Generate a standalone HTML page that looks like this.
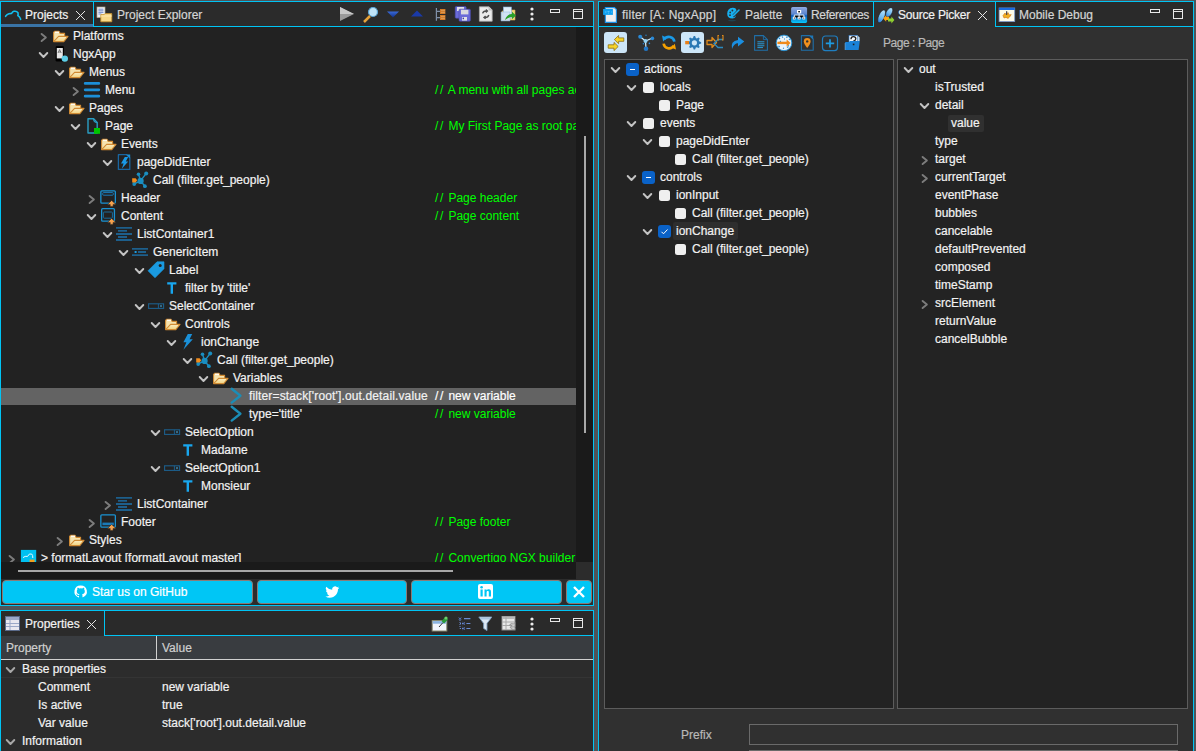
<!DOCTYPE html>
<html><head><meta charset="utf-8"><style>
html,body{margin:0;padding:0;width:1196px;height:751px;overflow:hidden;background:#4a4a4a}
.a{position:absolute;display:block}
.t{position:absolute;white-space:pre;font-family:"Liberation Sans",sans-serif;font-size:12px;-webkit-text-stroke-width:0.2px}
svg.a{overflow:visible}
</style></head><body>
<div class="a" style="left:0;top:0;width:1196px;height:751px;background:#505458"></div>
<div class="a" style="left:0px;top:1px;width:594px;height:605px;background:#222222;border:1px solid #00c4f4;box-sizing:border-box;"></div>
<div class="a" style="left:1px;top:2px;width:592px;height:24px;background:#2b2b2b;"></div>
<div class="a" style="left:1px;top:26px;width:592px;height:1px;background:#00c4f4;"></div>
<div class="a" style="left:1px;top:2px;width:92px;height:24px;background:#2b2b2b;"></div>
<div class="a" style="left:1px;top:24px;width:92px;height:3px;background:#3a74a6;"></div>
<div class="a" style="left:93px;top:1px;width:1px;height:26px;background:#00c4f4;"></div>
<svg class="a" style="left:0px;top:3px;" width="24" height="22" viewBox="0 0 24 22"><path d="M5.6 13.3 Q7 11.4 8.9 10.8 Q10.6 10.4 11.6 10.4 Q12.6 8.6 14 8.3 Q16.6 7.8 18 9.8 Q18.4 11.6 17.8 12.6 Q19.2 13.4 19.8 14.4 Q20.6 15.4 20.6 16.4" fill="none" stroke="#12c0f0" stroke-width="1.6" stroke-linecap="round" stroke-linejoin="round"/></svg>
<div class="t" style="left:25px;top:6px;height:18px;line-height:18px;color:#f2f2f2;">Projects</div>
<svg class="a" style="left:75px;top:10px;" width="11" height="11" viewBox="0 0 11 11"><path d="M1 1 L10 10 M10 1 L1 10" stroke="#e6e6e6" stroke-width="1"/></svg>
<svg class="a" style="left:94px;top:3px;" width="22" height="22" viewBox="0 0 22 22"><rect x="3" y="4" width="8" height="10.6" fill="#eef0f8" stroke="#b0a890" stroke-width="0.7"/><path d="M4.4 6.2h5M4.4 7.8h5M4.4 9.4h5M4.4 11h3" stroke="#5a78c0" stroke-width="0.8"/><path d="M6.8 11.6 H10.2 L11.2 10.6 H17.8 V18.8 H6.8 Z" fill="#f8d888" stroke="#c8902a" stroke-width="0.8"/><path d="M6.8 13 H17.8" stroke="#fff0c0" stroke-width="0.8"/></svg>
<div class="t" style="left:117px;top:6px;height:18px;line-height:18px;color:#d4d4d4;">Project Explorer</div>
<svg class="a" style="left:338px;top:6px;" width="18" height="16" viewBox="0 0 18 16"><path d="M2 1 L16 8 L2 15 Z" fill="#9a9a9a"/><path d="M2 1 L16 8 L2 8Z" fill="#c8c8c8"/></svg>
<svg class="a" style="left:362px;top:6px;" width="18" height="18" viewBox="0 0 18 18"><circle cx="11" cy="6" r="4.5" fill="#bfe3f7" stroke="#5aa4d4" stroke-width="1.2"/><path d="M2 16 L8 10" stroke="#e6a23a" stroke-width="2.5"/></svg>
<svg class="a" style="left:386px;top:11px;" width="14" height="8" viewBox="0 0 14 8"><defs><linearGradient id="tri" x1="0" y1="0" x2="0" y2="1"><stop offset="0" stop-color="#3a6ad8"/><stop offset="1" stop-color="#10308a"/></linearGradient></defs><path d="M1 0.5 H13 L7 6.5 Z" fill="url(#tri)"/></svg>
<svg class="a" style="left:410px;top:10px;" width="14" height="8" viewBox="0 0 14 8"><path d="M1 6.5 H13 L7 0.5 Z" fill="#1a3aa8"/></svg>
<svg class="a" style="left:434px;top:6px;" width="14" height="16" viewBox="0 0 14 16"><path d="M2.4 2 V14.8 M2.4 5.4 H6 M2.4 11.6 H6" stroke="#8090a8" stroke-width="1.2"/><rect x="6" y="3" width="5.4" height="5" fill="#d07a28"/><rect x="6" y="9" width="5.4" height="5" fill="#d07a28"/><path d="M7.6 4.6h0.8M9.6 4.6h0.8M7.6 6.4h0.8M9.6 6.4h0.8M7.6 10.6h0.8M9.6 10.6h0.8M7.6 12.4h0.8M9.6 12.4h0.8" stroke="#ffe0b0" stroke-width="0.8"/></svg>
<svg class="a" style="left:454px;top:6px;" width="18" height="18" viewBox="0 0 18 18"><rect x="1.2" y="0.6" width="11" height="11.6" rx="1" fill="#6a6ad8" stroke="#4a4aa8" stroke-width="0.6"/><rect x="3" y="1" width="7" height="4" fill="#e0e0e8"/><rect x="5" y="3.2" width="11.4" height="12" rx="1" fill="#6a6ad8" stroke="#4a4aa8" stroke-width="0.6"/><rect x="7" y="3.8" width="7.4" height="4.6" fill="#d8d8e0"/><rect x="8" y="11" width="5" height="3.6" fill="#e0e0e8"/><rect x="8.6" y="11.6" width="1.4" height="1.6" fill="#3a3aa0"/></svg>
<svg class="a" style="left:478px;top:6px;" width="16" height="17" viewBox="0 0 16 17"><path d="M1.4 0.8 H11 L14.2 4 V15.2 H1.4 Z" fill="#ececec" stroke="#a8a8a8" stroke-width="0.8"/><path d="M11 0.8 V4 H14.2" fill="#d0d0d0" stroke="#a8a8a8" stroke-width="0.6"/><path d="M4.6 7.4 Q5.4 4.6 8.6 5 M7.8 3.6 L9.4 5 L7.8 6.4 M10.8 9 Q10 11.8 6.8 11.4 M7.6 10 L6 11.4 L7.6 12.8" fill="none" stroke="#505050" stroke-width="1.4"/></svg>
<svg class="a" style="left:500px;top:6px;" width="18" height="17" viewBox="0 0 18 17"><path d="M2 5 H6 L7 4 H15 V14 H2 Z" fill="#f0d878" stroke="#d0a850" stroke-width="0.6"/><rect x="3.4" y="1" width="8" height="11" fill="#e0eefa" stroke="#8ab0d8" stroke-width="0.6"/><path d="M1 6 H10 V15 H1 Z" fill="#cfe2f6" stroke="#8ab0d8" stroke-width="0.5" opacity="0.9"/><path d="M5 14 Q7 8 12 8 V5.8 L16 9.6 L12 13.2 V11 Q9 11 5 14 Z" fill="#2aa02a"/></svg>
<svg class="a" style="left:529.4px;top:6.5px;" width="6" height="16" viewBox="0 0 6 16"><circle cx="3" cy="2" r="1.6" fill="#ececec"/><circle cx="3" cy="7" r="1.6" fill="#ececec"/><circle cx="3" cy="12" r="1.6" fill="#ececec"/></svg>
<svg class="a" style="left:550px;top:9px;" width="12" height="12" viewBox="0 0 12 12"><rect x="0.5" y="0.5" width="9" height="3" fill="none" stroke="#e8e8e8" stroke-width="1"/></svg>
<svg class="a" style="left:573px;top:9px;" width="12" height="12" viewBox="0 0 12 12"><rect x="0.5" y="0.5" width="9" height="9" fill="none" stroke="#e8e8e8" stroke-width="1"/><path d="M0 2.5 H10" stroke="#e8e8e8" stroke-width="1"/></svg>
<div class="a" style="left:0px;top:27px;width:576px;height:535px;overflow:hidden">
<svg class="a" style="left:36px;top:0px;" width="14" height="18" viewBox="0 0 14 18"><path d="M5.6 6.9 L9.9 10.5 L5.6 14.1" fill="none" stroke="#7c7c7c" stroke-width="1.9" stroke-linecap="round" stroke-linejoin="round"/></svg>
<svg class="a" style="left:52px;top:0px;" width="18" height="18" viewBox="0 0 18 18"><defs><linearGradient id="fg" x1="0" y1="0" x2="0" y2="1"><stop offset="0" stop-color="#fbeec4"/><stop offset="1" stop-color="#f2d27e"/></linearGradient></defs><path d="M1.6 14.6 V5.4 L2.8 4.2 H7 L8.2 6.4 H12.6 V9.4" fill="#f6e3ae" stroke="#d18b34" stroke-width="1.1" stroke-linejoin="round"/><rect x="3" y="4.6" width="4" height="1.4" fill="#fffaf0"/><path d="M1.6 14.6 L6.6 9.4 H16 L11.8 14.6 Z" fill="url(#fg)" stroke="#d18b34" stroke-width="1.1" stroke-linejoin="round"/></svg>
<div class="t" style="left:73px;top:0px;height:18px;line-height:18px;color:#f2f2f2;">Platforms</div>
<svg class="a" style="left:36px;top:18px;" width="14" height="18" viewBox="0 0 14 18"><path d="M3.7 8 L7.5 12 L11.3 8" fill="none" stroke="#c4c4c4" stroke-width="1.9" stroke-linecap="round" stroke-linejoin="round"/></svg>
<svg class="a" style="left:52px;top:18px;" width="18" height="18" viewBox="0 0 18 18"><rect x="3.6" y="1" width="8.4" height="15.6" rx="1.4" fill="#000"/><rect x="4.8" y="3" width="6" height="10.4" fill="#e6e6e6"/><path d="M6 8 L7.6 4.6 L9.2 8 M6.6 7 H8.6" stroke="#555" stroke-width="0.7" fill="none"/><circle cx="12.8" cy="13.6" r="3.2" fill="#5ccde6"/></svg>
<div class="t" style="left:73px;top:18px;height:18px;line-height:18px;color:#f2f2f2;">NgxApp</div>
<svg class="a" style="left:52px;top:36px;" width="14" height="18" viewBox="0 0 14 18"><path d="M3.7 8 L7.5 12 L11.3 8" fill="none" stroke="#c4c4c4" stroke-width="1.9" stroke-linecap="round" stroke-linejoin="round"/></svg>
<svg class="a" style="left:68px;top:36px;" width="18" height="18" viewBox="0 0 18 18"><defs><linearGradient id="fg" x1="0" y1="0" x2="0" y2="1"><stop offset="0" stop-color="#fbeec4"/><stop offset="1" stop-color="#f2d27e"/></linearGradient></defs><path d="M1.6 14.6 V5.4 L2.8 4.2 H7 L8.2 6.4 H12.6 V9.4" fill="#f6e3ae" stroke="#d18b34" stroke-width="1.1" stroke-linejoin="round"/><rect x="3" y="4.6" width="4" height="1.4" fill="#fffaf0"/><path d="M1.6 14.6 L6.6 9.4 H16 L11.8 14.6 Z" fill="url(#fg)" stroke="#d18b34" stroke-width="1.1" stroke-linejoin="round"/></svg>
<div class="t" style="left:89px;top:36px;height:18px;line-height:18px;color:#f2f2f2;">Menus</div>
<svg class="a" style="left:68px;top:54px;" width="14" height="18" viewBox="0 0 14 18"><path d="M5.6 6.9 L9.9 10.5 L5.6 14.1" fill="none" stroke="#7c7c7c" stroke-width="1.9" stroke-linecap="round" stroke-linejoin="round"/></svg>
<svg class="a" style="left:84px;top:54px;" width="18" height="18" viewBox="0 0 18 18"><path d="M1.2 2.4 H14.8 M1.2 8.8 H14.8 M1.2 15.2 H14.8" stroke="#1c8fd8" stroke-width="2.8" stroke-linecap="round"/></svg>
<div class="t" style="left:105px;top:54px;height:18px;line-height:18px;color:#f2f2f2;">Menu</div>
<div class="t" style="left:435px;top:54px;height:18px;line-height:18px;color:#00ff00;-webkit-text-stroke-width:0;"><span style="letter-spacing:1.7px">//</span> A menu with all pages ac</div>
<svg class="a" style="left:52px;top:72px;" width="14" height="18" viewBox="0 0 14 18"><path d="M3.7 8 L7.5 12 L11.3 8" fill="none" stroke="#c4c4c4" stroke-width="1.9" stroke-linecap="round" stroke-linejoin="round"/></svg>
<svg class="a" style="left:68px;top:72px;" width="18" height="18" viewBox="0 0 18 18"><defs><linearGradient id="fg" x1="0" y1="0" x2="0" y2="1"><stop offset="0" stop-color="#fbeec4"/><stop offset="1" stop-color="#f2d27e"/></linearGradient></defs><path d="M1.6 14.6 V5.4 L2.8 4.2 H7 L8.2 6.4 H12.6 V9.4" fill="#f6e3ae" stroke="#d18b34" stroke-width="1.1" stroke-linejoin="round"/><rect x="3" y="4.6" width="4" height="1.4" fill="#fffaf0"/><path d="M1.6 14.6 L6.6 9.4 H16 L11.8 14.6 Z" fill="url(#fg)" stroke="#d18b34" stroke-width="1.1" stroke-linejoin="round"/></svg>
<div class="t" style="left:89px;top:72px;height:18px;line-height:18px;color:#f2f2f2;">Pages</div>
<svg class="a" style="left:68px;top:90px;" width="14" height="18" viewBox="0 0 14 18"><path d="M3.7 8 L7.5 12 L11.3 8" fill="none" stroke="#c4c4c4" stroke-width="1.9" stroke-linecap="round" stroke-linejoin="round"/></svg>
<svg class="a" style="left:84px;top:90px;" width="18" height="18" viewBox="0 0 18 18"><path d="M4 1.8 H9.6 L13.2 5.6 V16 H4 Z" fill="none" stroke="#2a9ec4" stroke-width="1.4" stroke-linejoin="round"/><path d="M9.6 1.8 Q9.6 5.6 13.2 5.6" fill="none" stroke="#2a9ec4" stroke-width="1.1"/><rect x="10" y="11" width="6" height="5.8" fill="#00c600"/></svg>
<div class="t" style="left:105px;top:90px;height:18px;line-height:18px;color:#f2f2f2;">Page</div>
<div class="t" style="left:435px;top:90px;height:18px;line-height:18px;color:#00ff00;-webkit-text-stroke-width:0;"><span style="letter-spacing:1.7px">//</span> My First Page as root pag</div>
<svg class="a" style="left:84px;top:108px;" width="14" height="18" viewBox="0 0 14 18"><path d="M3.7 8 L7.5 12 L11.3 8" fill="none" stroke="#c4c4c4" stroke-width="1.9" stroke-linecap="round" stroke-linejoin="round"/></svg>
<svg class="a" style="left:100px;top:108px;" width="18" height="18" viewBox="0 0 18 18"><defs><linearGradient id="fg" x1="0" y1="0" x2="0" y2="1"><stop offset="0" stop-color="#fbeec4"/><stop offset="1" stop-color="#f2d27e"/></linearGradient></defs><path d="M1.6 14.6 V5.4 L2.8 4.2 H7 L8.2 6.4 H12.6 V9.4" fill="#f6e3ae" stroke="#d18b34" stroke-width="1.1" stroke-linejoin="round"/><rect x="3" y="4.6" width="4" height="1.4" fill="#fffaf0"/><path d="M1.6 14.6 L6.6 9.4 H16 L11.8 14.6 Z" fill="url(#fg)" stroke="#d18b34" stroke-width="1.1" stroke-linejoin="round"/></svg>
<div class="t" style="left:121px;top:108px;height:18px;line-height:18px;color:#f2f2f2;">Events</div>
<svg class="a" style="left:100px;top:126px;" width="14" height="18" viewBox="0 0 14 18"><path d="M3.7 8 L7.5 12 L11.3 8" fill="none" stroke="#c4c4c4" stroke-width="1.9" stroke-linecap="round" stroke-linejoin="round"/></svg>
<svg class="a" style="left:116px;top:126px;" width="18" height="18" viewBox="0 0 18 18"><path d="M2.4 1.7 H10.6 L13.8 4.9 V16.4 H2.4 Z" fill="none" stroke="#1a66a0" stroke-width="1.3" stroke-linejoin="round"/><path d="M10.2 1.4 L14.2 1.4 L14.2 5.4 Z" fill="#1a90d8"/><path d="M8.8 4 H12.2 L9.8 8.4 H12.2 L5.8 15.8 L7.6 10.6 H5 Z" fill="#1a9ae8"/></svg>
<div class="t" style="left:137px;top:126px;height:18px;line-height:18px;color:#f2f2f2;">pageDidEnter</div>
<svg class="a" style="left:132px;top:144px;" width="18" height="18" viewBox="0 0 18 18"><path d="M8.6 9.9 L6.5 3.2 M8.6 9.9 L14.2 2.4 M8.6 9.9 L12.9 15.2 M8.6 9.9 L2 13" stroke="#1a8ec0" stroke-width="1.4"/><circle cx="8.6" cy="9.9" r="3.1" fill="#1a8ec0"/><circle cx="6.5" cy="3.2" r="1.8" fill="#1a8ec0"/><circle cx="14.2" cy="2.6" r="2" fill="#1a8ec0"/><circle cx="12.9" cy="15.2" r="1.9" fill="#1a8ec0"/><circle cx="2.2" cy="13" r="1.9" fill="#1a8ec0"/><path d="M0.2 7.2 H3.6 L5.2 9.3 L3.6 11.5 H0.2 Z" fill="#f08c1e"/></svg>
<div class="t" style="left:153px;top:144px;height:18px;line-height:18px;color:#f2f2f2;">Call (filter.get_people)</div>
<svg class="a" style="left:84px;top:162px;" width="14" height="18" viewBox="0 0 14 18"><path d="M5.6 6.9 L9.9 10.5 L5.6 14.1" fill="none" stroke="#7c7c7c" stroke-width="1.9" stroke-linecap="round" stroke-linejoin="round"/></svg>
<svg class="a" style="left:100px;top:162px;" width="18" height="18" viewBox="0 0 18 18"><rect x="0.85" y="1.85" width="14.5" height="12.3" rx="1" fill="none" stroke="#1a92d2" stroke-width="1.3"/><rect x="2.7" y="3.6" width="10.6" height="2.6" rx="0.8" fill="none" stroke="#1a7ab8" stroke-width="1"/><path d="M11.65 11.4 L15.8 15.4 H13.1 V17.4 H10.2 V15.4 H7.5 Z" fill="#f6a24e" stroke="#222" stroke-width="0.5" stroke-linejoin="round"/></svg>
<div class="t" style="left:121px;top:162px;height:18px;line-height:18px;color:#f2f2f2;">Header</div>
<div class="t" style="left:435px;top:162px;height:18px;line-height:18px;color:#00ff00;-webkit-text-stroke-width:0;"><span style="letter-spacing:1.7px">//</span> Page header</div>
<svg class="a" style="left:84px;top:180px;" width="14" height="18" viewBox="0 0 14 18"><path d="M3.7 8 L7.5 12 L11.3 8" fill="none" stroke="#c4c4c4" stroke-width="1.9" stroke-linecap="round" stroke-linejoin="round"/></svg>
<svg class="a" style="left:100px;top:180px;" width="18" height="18" viewBox="0 0 18 18"><rect x="1.65" y="1.65" width="12.8" height="12.5" rx="1" fill="none" stroke="#1a92d2" stroke-width="1.3"/><rect x="3.4" y="5" width="9" height="6.2" rx="0.8" fill="none" stroke="#1a6a9a" stroke-width="1"/><path d="M11.65 11.4 L15.8 15.4 H13.1 V17.4 H10.2 V15.4 H7.5 Z" fill="#f6a24e" stroke="#222" stroke-width="0.5" stroke-linejoin="round"/></svg>
<div class="t" style="left:121px;top:180px;height:18px;line-height:18px;color:#f2f2f2;">Content</div>
<div class="t" style="left:435px;top:180px;height:18px;line-height:18px;color:#00ff00;-webkit-text-stroke-width:0;"><span style="letter-spacing:1.7px">//</span> Page content</div>
<svg class="a" style="left:100px;top:198px;" width="14" height="18" viewBox="0 0 14 18"><path d="M3.7 8 L7.5 12 L11.3 8" fill="none" stroke="#c4c4c4" stroke-width="1.9" stroke-linecap="round" stroke-linejoin="round"/></svg>
<svg class="a" style="left:116px;top:198px;" width="18" height="18" viewBox="0 0 18 18"><path d="M0 2.8 H16 M2 5.9 H11 M0 9 H16 M2 12 H11 M0 15 H16" stroke="#1d5f8c" stroke-width="1.8"/></svg>
<div class="t" style="left:137px;top:198px;height:18px;line-height:18px;color:#f2f2f2;">ListContainer1</div>
<svg class="a" style="left:116px;top:216px;" width="14" height="18" viewBox="0 0 14 18"><path d="M3.7 8 L7.5 12 L11.3 8" fill="none" stroke="#c4c4c4" stroke-width="1.9" stroke-linecap="round" stroke-linejoin="round"/></svg>
<svg class="a" style="left:132px;top:216px;" width="18" height="18" viewBox="0 0 18 18"><path d="M0 5.9 H16 M6 9 H14 M0 12.2 H16" stroke="#1d5f8c" stroke-width="1.8"/><rect x="2.6" y="8" width="2" height="2" fill="#1a9ae0"/></svg>
<div class="t" style="left:153px;top:216px;height:18px;line-height:18px;color:#f2f2f2;">GenericItem</div>
<svg class="a" style="left:132px;top:234px;" width="14" height="18" viewBox="0 0 14 18"><path d="M3.7 8 L7.5 12 L11.3 8" fill="none" stroke="#c4c4c4" stroke-width="1.9" stroke-linecap="round" stroke-linejoin="round"/></svg>
<svg class="a" style="left:148px;top:234px;" width="18" height="18" viewBox="0 0 18 18"><path d="M0 9.8 L9 0.8 H16 V7.8 L7 16.8 Z" fill="#1a9ae0" stroke="#1a9ae0" stroke-width="0.6" stroke-linejoin="round"/><circle cx="12.2" cy="4.6" r="1.5" fill="#222"/></svg>
<div class="t" style="left:169px;top:234px;height:18px;line-height:18px;color:#f2f2f2;">Label</div>
<svg class="a" style="left:164px;top:252px;" width="18" height="18" viewBox="0 0 18 18"><path d="M3.2 3.3 H12.4 V5.5 H9 V14.8 H6.6 V5.5 H3.2 Z" fill="#18a6ee"/></svg>
<div class="t" style="left:185px;top:252px;height:18px;line-height:18px;color:#f2f2f2;">filter by 'title'</div>
<svg class="a" style="left:132px;top:270px;" width="14" height="18" viewBox="0 0 14 18"><path d="M3.7 8 L7.5 12 L11.3 8" fill="none" stroke="#c4c4c4" stroke-width="1.9" stroke-linecap="round" stroke-linejoin="round"/></svg>
<svg class="a" style="left:148px;top:270px;" width="18" height="18" viewBox="0 0 18 18"><rect x="0.6" y="6.8" width="15" height="4.6" fill="none" stroke="#1d5f8c" stroke-width="1.1"/><path d="M10.4 6.8 V11.4" stroke="#1d5f8c" stroke-width="1"/><circle cx="13" cy="9.1" r="1.1" fill="#3a7a9a"/></svg>
<div class="t" style="left:169px;top:270px;height:18px;line-height:18px;color:#f2f2f2;">SelectContainer</div>
<svg class="a" style="left:148px;top:288px;" width="14" height="18" viewBox="0 0 14 18"><path d="M3.7 8 L7.5 12 L11.3 8" fill="none" stroke="#c4c4c4" stroke-width="1.9" stroke-linecap="round" stroke-linejoin="round"/></svg>
<svg class="a" style="left:164px;top:288px;" width="18" height="18" viewBox="0 0 18 18"><defs><linearGradient id="fg" x1="0" y1="0" x2="0" y2="1"><stop offset="0" stop-color="#fbeec4"/><stop offset="1" stop-color="#f2d27e"/></linearGradient></defs><path d="M1.6 14.6 V5.4 L2.8 4.2 H7 L8.2 6.4 H12.6 V9.4" fill="#f6e3ae" stroke="#d18b34" stroke-width="1.1" stroke-linejoin="round"/><rect x="3" y="4.6" width="4" height="1.4" fill="#fffaf0"/><path d="M1.6 14.6 L6.6 9.4 H16 L11.8 14.6 Z" fill="url(#fg)" stroke="#d18b34" stroke-width="1.1" stroke-linejoin="round"/></svg>
<div class="t" style="left:185px;top:288px;height:18px;line-height:18px;color:#f2f2f2;">Controls</div>
<svg class="a" style="left:164px;top:306px;" width="14" height="18" viewBox="0 0 14 18"><path d="M3.7 8 L7.5 12 L11.3 8" fill="none" stroke="#c4c4c4" stroke-width="1.9" stroke-linecap="round" stroke-linejoin="round"/></svg>
<svg class="a" style="left:180px;top:306px;" width="18" height="18" viewBox="0 0 18 18"><path d="M7.8 1 H12.2 L9.6 6.2 H12.8 L3.4 16.8 L6.4 9.2 H3.4 Z" fill="#1a90d8"/></svg>
<div class="t" style="left:201px;top:306px;height:18px;line-height:18px;color:#f2f2f2;">ionChange</div>
<svg class="a" style="left:180px;top:324px;" width="14" height="18" viewBox="0 0 14 18"><path d="M3.7 8 L7.5 12 L11.3 8" fill="none" stroke="#c4c4c4" stroke-width="1.9" stroke-linecap="round" stroke-linejoin="round"/></svg>
<svg class="a" style="left:196px;top:324px;" width="18" height="18" viewBox="0 0 18 18"><path d="M8.6 9.9 L6.5 3.2 M8.6 9.9 L14.2 2.4 M8.6 9.9 L12.9 15.2 M8.6 9.9 L2 13" stroke="#1a8ec0" stroke-width="1.4"/><circle cx="8.6" cy="9.9" r="3.1" fill="#1a8ec0"/><circle cx="6.5" cy="3.2" r="1.8" fill="#1a8ec0"/><circle cx="14.2" cy="2.6" r="2" fill="#1a8ec0"/><circle cx="12.9" cy="15.2" r="1.9" fill="#1a8ec0"/><circle cx="2.2" cy="13" r="1.9" fill="#1a8ec0"/><path d="M0.2 7.2 H3.6 L5.2 9.3 L3.6 11.5 H0.2 Z" fill="#f08c1e"/></svg>
<div class="t" style="left:217px;top:324px;height:18px;line-height:18px;color:#f2f2f2;">Call (filter.get_people)</div>
<svg class="a" style="left:196px;top:342px;" width="14" height="18" viewBox="0 0 14 18"><path d="M3.7 8 L7.5 12 L11.3 8" fill="none" stroke="#c4c4c4" stroke-width="1.9" stroke-linecap="round" stroke-linejoin="round"/></svg>
<svg class="a" style="left:212px;top:342px;" width="18" height="18" viewBox="0 0 18 18"><defs><linearGradient id="fg" x1="0" y1="0" x2="0" y2="1"><stop offset="0" stop-color="#fbeec4"/><stop offset="1" stop-color="#f2d27e"/></linearGradient></defs><path d="M1.6 14.6 V5.4 L2.8 4.2 H7 L8.2 6.4 H12.6 V9.4" fill="#f6e3ae" stroke="#d18b34" stroke-width="1.1" stroke-linejoin="round"/><rect x="3" y="4.6" width="4" height="1.4" fill="#fffaf0"/><path d="M1.6 14.6 L6.6 9.4 H16 L11.8 14.6 Z" fill="url(#fg)" stroke="#d18b34" stroke-width="1.1" stroke-linejoin="round"/></svg>
<div class="t" style="left:233px;top:342px;height:18px;line-height:18px;color:#f2f2f2;">Variables</div>
<div class="a" style="left:1px;top:361px;width:575px;height:17px;background:#636363"></div>
<svg class="a" style="left:228px;top:360px;" width="18" height="18" viewBox="0 0 18 18"><path d="M3.7 1.8 L12.4 8.7 L3.7 15.6" fill="none" stroke="#1b8db6" stroke-width="2.4" stroke-linecap="round" stroke-linejoin="round"/></svg>
<div class="t" style="left:249px;top:360px;height:18px;line-height:18px;color:#f2f2f2;letter-spacing:0.14px;">filter=stack['root'].out.detail.value</div>
<div class="t" style="left:435px;top:360px;height:18px;line-height:18px;color:#ffffff;"><span style="letter-spacing:1.7px">//</span> new variable</div>
<svg class="a" style="left:228px;top:378px;" width="18" height="18" viewBox="0 0 18 18"><path d="M3.7 1.8 L12.4 8.7 L3.7 15.6" fill="none" stroke="#1b8db6" stroke-width="2.4" stroke-linecap="round" stroke-linejoin="round"/></svg>
<div class="t" style="left:249px;top:378px;height:18px;line-height:18px;color:#f2f2f2;">type='title'</div>
<div class="t" style="left:435px;top:378px;height:18px;line-height:18px;color:#00ff00;-webkit-text-stroke-width:0;"><span style="letter-spacing:1.7px">//</span> new variable</div>
<svg class="a" style="left:148px;top:396px;" width="14" height="18" viewBox="0 0 14 18"><path d="M3.7 8 L7.5 12 L11.3 8" fill="none" stroke="#c4c4c4" stroke-width="1.9" stroke-linecap="round" stroke-linejoin="round"/></svg>
<svg class="a" style="left:164px;top:396px;" width="18" height="18" viewBox="0 0 18 18"><rect x="0.6" y="6.8" width="15" height="4.6" fill="none" stroke="#1d5f8c" stroke-width="1.1"/><path d="M10.4 6.8 V11.4" stroke="#1d5f8c" stroke-width="1"/><circle cx="13" cy="9.1" r="1.1" fill="#3a7a9a"/></svg>
<div class="t" style="left:185px;top:396px;height:18px;line-height:18px;color:#f2f2f2;">SelectOption</div>
<svg class="a" style="left:180px;top:414px;" width="18" height="18" viewBox="0 0 18 18"><path d="M3.2 3.3 H12.4 V5.5 H9 V14.8 H6.6 V5.5 H3.2 Z" fill="#18a6ee"/></svg>
<div class="t" style="left:201px;top:414px;height:18px;line-height:18px;color:#f2f2f2;">Madame</div>
<svg class="a" style="left:148px;top:432px;" width="14" height="18" viewBox="0 0 14 18"><path d="M3.7 8 L7.5 12 L11.3 8" fill="none" stroke="#c4c4c4" stroke-width="1.9" stroke-linecap="round" stroke-linejoin="round"/></svg>
<svg class="a" style="left:164px;top:432px;" width="18" height="18" viewBox="0 0 18 18"><rect x="0.6" y="6.8" width="15" height="4.6" fill="none" stroke="#1d5f8c" stroke-width="1.1"/><path d="M10.4 6.8 V11.4" stroke="#1d5f8c" stroke-width="1"/><circle cx="13" cy="9.1" r="1.1" fill="#3a7a9a"/></svg>
<div class="t" style="left:185px;top:432px;height:18px;line-height:18px;color:#f2f2f2;">SelectOption1</div>
<svg class="a" style="left:180px;top:450px;" width="18" height="18" viewBox="0 0 18 18"><path d="M3.2 3.3 H12.4 V5.5 H9 V14.8 H6.6 V5.5 H3.2 Z" fill="#18a6ee"/></svg>
<div class="t" style="left:201px;top:450px;height:18px;line-height:18px;color:#f2f2f2;">Monsieur</div>
<svg class="a" style="left:100px;top:468px;" width="14" height="18" viewBox="0 0 14 18"><path d="M5.6 6.9 L9.9 10.5 L5.6 14.1" fill="none" stroke="#7c7c7c" stroke-width="1.9" stroke-linecap="round" stroke-linejoin="round"/></svg>
<svg class="a" style="left:116px;top:468px;" width="18" height="18" viewBox="0 0 18 18"><path d="M0 2.8 H16 M2 5.9 H11 M0 9 H16 M2 12 H11 M0 15 H16" stroke="#1d5f8c" stroke-width="1.8"/></svg>
<div class="t" style="left:137px;top:468px;height:18px;line-height:18px;color:#f2f2f2;">ListContainer</div>
<svg class="a" style="left:84px;top:486px;" width="14" height="18" viewBox="0 0 14 18"><path d="M5.6 6.9 L9.9 10.5 L5.6 14.1" fill="none" stroke="#7c7c7c" stroke-width="1.9" stroke-linecap="round" stroke-linejoin="round"/></svg>
<svg class="a" style="left:100px;top:486px;" width="18" height="18" viewBox="0 0 18 18"><rect x="0.85" y="1.85" width="14.5" height="12.3" rx="1" fill="none" stroke="#1a92d2" stroke-width="1.3"/><rect x="2.4" y="9.6" width="11.4" height="2.6" fill="#1a7ab8"/><path d="M11.65 11.4 L15.8 15.4 H13.1 V17.4 H10.2 V15.4 H7.5 Z" fill="#f6a24e" stroke="#222" stroke-width="0.5" stroke-linejoin="round"/></svg>
<div class="t" style="left:121px;top:486px;height:18px;line-height:18px;color:#f2f2f2;">Footer</div>
<div class="t" style="left:435px;top:486px;height:18px;line-height:18px;color:#00ff00;-webkit-text-stroke-width:0;"><span style="letter-spacing:1.7px">//</span> Page footer</div>
<svg class="a" style="left:52px;top:504px;" width="14" height="18" viewBox="0 0 14 18"><path d="M5.6 6.9 L9.9 10.5 L5.6 14.1" fill="none" stroke="#7c7c7c" stroke-width="1.9" stroke-linecap="round" stroke-linejoin="round"/></svg>
<svg class="a" style="left:68px;top:504px;" width="18" height="18" viewBox="0 0 18 18"><defs><linearGradient id="fg" x1="0" y1="0" x2="0" y2="1"><stop offset="0" stop-color="#fbeec4"/><stop offset="1" stop-color="#f2d27e"/></linearGradient></defs><path d="M1.6 14.6 V5.4 L2.8 4.2 H7 L8.2 6.4 H12.6 V9.4" fill="#f6e3ae" stroke="#d18b34" stroke-width="1.1" stroke-linejoin="round"/><rect x="3" y="4.6" width="4" height="1.4" fill="#fffaf0"/><path d="M1.6 14.6 L6.6 9.4 H16 L11.8 14.6 Z" fill="url(#fg)" stroke="#d18b34" stroke-width="1.1" stroke-linejoin="round"/></svg>
<div class="t" style="left:89px;top:504px;height:18px;line-height:18px;color:#f2f2f2;">Styles</div>
<svg class="a" style="left:4px;top:522px;" width="14" height="18" viewBox="0 0 14 18"><path d="M5.6 6.9 L9.9 10.5 L5.6 14.1" fill="none" stroke="#7c7c7c" stroke-width="1.9" stroke-linecap="round" stroke-linejoin="round"/></svg>
<svg class="a" style="left:20px;top:522px;" width="18" height="18" viewBox="0 0 18 18"><rect x="0.9" y="0.9" width="15.3" height="15.3" fill="#00c0f0"/><path d="M3 8.6 Q5 6.8 7.6 7.4 Q9 4 11.6 5 Q13 6 12.8 9" fill="none" stroke="#e8f8ff" stroke-width="1"/><rect x="9.6" y="10.6" width="5" height="4" fill="#f0a020"/></svg>
<div class="t" style="left:41px;top:522px;height:18px;line-height:18px;color:#f2f2f2;">&gt; formatLayout [formatLayout master]</div>
<div class="t" style="left:435px;top:522px;height:18px;line-height:18px;color:#00ff00;-webkit-text-stroke-width:0;"><span style="letter-spacing:1.7px">//</span> Convertigo NGX builder</div>
</div>
<div class="a" style="left:576px;top:27px;width:17px;height:552px;background:#1a1a1a;"></div>
<div class="a" style="left:584px;top:136px;width:2px;height:297px;background:#a8a8a8;"></div>
<div class="a" style="left:1px;top:562px;width:575px;height:17px;background:#1a1a1a;"></div>
<div class="a" style="left:18px;top:570px;width:435px;height:2px;background:#a8a8a8;"></div>
<div class="a" style="left:576px;top:562px;width:17px;height:17px;background:#2c2c2c;"></div>
<div class="a" style="left:1px;top:579px;width:592px;height:26px;background:#2c2c2c;"></div>
<div class="a" style="left:2px;top:580px;width:251px;height:24px;background:#00c6f5;border:1px solid #8a7c78;border-radius:4px;box-sizing:border-box;"></div>
<div class="a" style="left:257px;top:580px;width:150px;height:24px;background:#00c6f5;border:1px solid #8a7c78;border-radius:4px;box-sizing:border-box;"></div>
<div class="a" style="left:411px;top:580px;width:151px;height:24px;background:#00c6f5;border:1px solid #8a7c78;border-radius:4px;box-sizing:border-box;"></div>
<div class="a" style="left:566px;top:580px;width:26px;height:24px;background:#00c6f5;border:1px solid #8a7c78;border-radius:4px;box-sizing:border-box;"></div>
<svg class="a" style="left:73.5px;top:585px;" width="16" height="16" viewBox="0 0 16 16"><g transform="scale(0.82)"><path d="M8 0.5a7.5 7.5 0 0 0-2.4 14.6c.4.1.5-.2.5-.4v-1.3c-2.1.5-2.5-1-2.5-1-.3-.9-.8-1.1-.8-1.1-.7-.5.1-.5.1-.5.8.1 1.2.8 1.2.8.7 1.2 1.8.8 2.2.6.1-.5.3-.8.5-1-1.7-.2-3.4-.8-3.4-3.7 0-.8.3-1.5.8-2-.1-.2-.3-1 .1-2 0 0 .6-.2 2.1.8a7 7 0 0 1 3.8 0c1.4-1 2.1-.8 2.1-.8.4 1 .2 1.8.1 2 .5.5.8 1.2.8 2 0 2.9-1.8 3.5-3.4 3.7.3.2.5.7.5 1.4v2c0 .2.1.5.6.4A7.5 7.5 0 0 0 8 .5z" fill="#fff"/></g></svg>
<div class="t" style="left:92px;top:583px;height:18px;line-height:18px;color:#ffffff;">Star us on GitHub</div>
<svg class="a" style="left:325px;top:586px;" width="16" height="14" viewBox="0 0 16 14"><g transform="scale(0.92)"><path d="M15.5 1.8c-.6.3-1.2.4-1.8.5.7-.4 1.1-1 1.4-1.7-.6.4-1.3.6-2 .8A3.1 3.1 0 0 0 7.8 4.2 8.9 8.9 0 0 1 1.4.9a3.1 3.1 0 0 0 1 4.2c-.5 0-1-.2-1.4-.4 0 1.5 1.1 2.8 2.5 3.1-.5.1-.9.1-1.4 0 .4 1.3 1.6 2.2 2.9 2.2A6.3 6.3 0 0 1 .4 11.3 8.9 8.9 0 0 0 5.2 12.7c5.7 0 8.9-4.8 8.9-8.9v-.4c.6-.4 1.1-1 1.4-1.6z" fill="#fff"/></g></svg>
<svg class="a" style="left:478px;top:584px;" width="15" height="15" viewBox="0 0 15 15"><rect x="0" y="0" width="15" height="15" rx="2" fill="#fff"/><rect x="2.5" y="5.5" width="2.2" height="7" fill="#00c6f5"/><circle cx="3.6" cy="3.3" r="1.3" fill="#00c6f5"/><path d="M6.5 5.5h2.1v1c.4-.7 1.2-1.2 2.2-1.2 1.8 0 2.2 1.2 2.2 2.7v4.5h-2.2v-4c0-.8-.2-1.4-1-1.4s-1.2.6-1.2 1.4v4H6.5z" fill="#00c6f5"/></svg>
<svg class="a" style="left:572px;top:585px;" width="14" height="14" viewBox="0 0 14 14"><path d="M2 2 L12 12 M12 2 L2 12" stroke="#fff" stroke-width="2.4"/></svg>
<div class="a" style="left:0px;top:610px;width:594px;height:141px;background:#2c2c2c;border:1px solid #00c4f4;border-bottom:none;box-sizing:border-box;"></div>
<div class="a" style="left:1px;top:611px;width:592px;height:24px;background:#2b2b2b;"></div>
<div class="a" style="left:104px;top:611px;width:489px;height:24px;background:#2a2a2a;"></div>
<div class="a" style="left:104px;top:635px;width:489px;height:1px;background:#00c4f4;"></div>
<div class="a" style="left:104px;top:611px;width:1px;height:25px;background:#00c4f4;"></div>
<svg class="a" style="left:5px;top:616px;" width="16" height="15" viewBox="0 0 16 15"><rect x="0.5" y="0.5" width="14" height="14" fill="#e8e8f0" stroke="#5a6a8a"/><rect x="1" y="1" width="13" height="3" fill="#9aa8c8"/><path d="M1 7.5H14M1 10.5H14M5 4V14" stroke="#9aa8c8" stroke-width="1"/></svg>
<div class="t" style="left:25px;top:615px;height:18px;line-height:18px;color:#f2f2f2;">Properties</div>
<svg class="a" style="left:86px;top:619px;" width="11" height="11" viewBox="0 0 11 11"><path d="M1 1 L10 10 M10 1 L1 10" stroke="#e6e6e6" stroke-width="1"/></svg>
<svg class="a" style="left:431px;top:616px;" width="18" height="16" viewBox="0 0 18 16"><rect x="1.2" y="4.6" width="14.6" height="10.4" fill="#f2f6fc" stroke="#8a8a70" stroke-width="1"/><rect x="1.7" y="5.1" width="13.6" height="2.6" fill="#8ab4e0"/><path d="M8 11 L12 6.5" stroke="#333" stroke-width="1"/><path d="M10.5 5 L14.5 1 L17 3.5 L13 7.5 Z" fill="#2a9a3a"/><circle cx="15" cy="2" r="1.6" fill="#6ad06a"/></svg>
<svg class="a" style="left:458px;top:617px;" width="14" height="13" viewBox="0 0 14 13"><path d="M2 1 V11.5 M2 6.5 H5 M2 11.5 H5" stroke="#6a8ad0" stroke-width="1" stroke-dasharray="1 1"/><path d="M0.8 0.5 L3.2 2.9 M3.2 0.5 L0.8 2.9 M4.6 5.3 L7 7.7 M7 5.3 L4.6 7.7 M4.6 10.3 L7 12.7 M7 10.3 L4.6 12.7" stroke="#5a7ac8" stroke-width="0.9"/><path d="M6 1.7 H12.4 M8.4 6.5 H12.4 M8.4 11.5 H12.4" stroke="#6a8ad0" stroke-width="1.2"/></svg>
<svg class="a" style="left:478px;top:616px;" width="15" height="16" viewBox="0 0 15 16"><path d="M0.8 1 H13.8 L9 7.4 V14.6 L5.6 12.4 V7.4 Z" fill="#dce8f4" stroke="#7898b8" stroke-width="0.9"/><path d="M2 2 H12.6 L11.4 3.6 H3.2 Z" fill="#a8c4e0"/></svg>
<svg class="a" style="left:501px;top:616px;" width="17" height="16" viewBox="0 0 17 16"><rect x="1" y="0.5" width="13" height="13.5" fill="#e8e8e8" stroke="#8a8a8a"/><rect x="1" y="0.5" width="13" height="2.5" fill="#b8b8b8"/><path d="M1 6H14M1 9.5H14M5 1V14" stroke="#a8a8a8"/><path d="M8.5 9 Q10 6.5 12.5 8 L14 6.5 V11 H9.5 L11 9.5 Q9.5 8.5 8.5 9 Z M9 11 Q10.5 14.5 14.5 13" fill="#d0d0d0" stroke="#8a8a8a" stroke-width="0.8"/></svg>
<svg class="a" style="left:529.4px;top:616.5px;" width="6" height="16" viewBox="0 0 6 16"><circle cx="3" cy="2" r="1.6" fill="#ececec"/><circle cx="3" cy="7" r="1.6" fill="#ececec"/><circle cx="3" cy="12" r="1.6" fill="#ececec"/></svg>
<svg class="a" style="left:550px;top:618px;" width="12" height="12" viewBox="0 0 12 12"><rect x="0.5" y="0.5" width="9" height="3" fill="none" stroke="#e8e8e8" stroke-width="1"/></svg>
<svg class="a" style="left:573px;top:618px;" width="12" height="12" viewBox="0 0 12 12"><rect x="0.5" y="0.5" width="9" height="9" fill="none" stroke="#e8e8e8" stroke-width="1"/><path d="M0 2.5 H10" stroke="#e8e8e8" stroke-width="1"/></svg>
<div class="a" style="left:1px;top:636px;width:592px;height:23px;background:#393c40;"></div>
<div class="a" style="left:1px;top:659px;width:592px;height:1px;background:#d0d0d0;"></div>
<div class="a" style="left:156px;top:636px;width:1px;height:23px;background:#d0d0d0;"></div>
<div class="t" style="left:6px;top:639px;height:18px;line-height:18px;color:#cfcfcf;">Property</div>
<div class="t" style="left:162px;top:639px;height:18px;line-height:18px;color:#cfcfcf;">Value</div>
<div class="a" style="left:1px;top:660px;width:592px;height:91px;background:#2c2c2c;"></div>
<svg class="a" style="left:3px;top:660px;" width="14" height="18" viewBox="0 0 14 18"><path d="M3.7 8 L7.5 12 L11.3 8" fill="none" stroke="#a8a8a8" stroke-width="1.9" stroke-linecap="round" stroke-linejoin="round"/></svg>
<div class="t" style="left:22px;top:660px;height:18px;line-height:18px;color:#f2f2f2;">Base properties</div>
<div class="a" style="left:1px;top:677px;width:592px;height:1px;background:#343434;"></div>
<div class="t" style="left:38px;top:678px;height:18px;line-height:18px;color:#f2f2f2;">Comment</div>
<div class="t" style="left:162px;top:678px;height:18px;line-height:18px;color:#f2f2f2;">new variable</div>
<div class="t" style="left:38px;top:696px;height:18px;line-height:18px;color:#f2f2f2;">Is active</div>
<div class="t" style="left:162px;top:696px;height:18px;line-height:18px;color:#f2f2f2;">true</div>
<div class="t" style="left:38px;top:714px;height:18px;line-height:18px;color:#f2f2f2;">Var value</div>
<div class="t" style="left:162px;top:714px;height:18px;line-height:18px;color:#f2f2f2;">stack['root'].out.detail.value</div>
<svg class="a" style="left:3px;top:732px;" width="14" height="18" viewBox="0 0 14 18"><path d="M3.7 8 L7.5 12 L11.3 8" fill="none" stroke="#a8a8a8" stroke-width="1.9" stroke-linecap="round" stroke-linejoin="round"/></svg>
<div class="t" style="left:22px;top:732px;height:18px;line-height:18px;color:#f2f2f2;">Information</div>
<div class="a" style="left:598px;top:1px;width:596px;height:750px;background:#303030;border:1px solid #00c4f4;border-bottom:none;box-sizing:border-box;"></div>
<div class="a" style="left:599px;top:2px;width:274px;height:24px;background:#2a2a2a;"></div>
<div class="a" style="left:599px;top:26px;width:274px;height:1px;background:#00c4f4;"></div>
<div class="a" style="left:873px;top:1px;width:1px;height:26px;background:#00c4f4;"></div>
<div class="a" style="left:995px;top:1px;width:1px;height:26px;background:#00c4f4;"></div>
<div class="a" style="left:996px;top:2px;width:197px;height:24px;background:#2a2a2a;"></div>
<div class="a" style="left:995px;top:26px;width:198px;height:1px;background:#00c4f4;"></div>
<svg class="a" style="left:600px;top:3px;" width="20" height="22" viewBox="0 0 20 22"><path d="M5.3 4.6 H14.4 L16.4 6.6 V19.4 H5.3 Z" fill="#f0eeee" stroke="#1a90e8" stroke-width="1.1"/><rect x="3.1" y="6" width="9.8" height="5.9" fill="#10a0f0"/><path d="M5 9 h1.5 M7.5 8.6 h2 M8.5 9.6 v1 M11 9 h1" stroke="#7ad0ff" stroke-width="0.7"/></svg>
<div class="t" style="left:622px;top:6px;height:18px;line-height:18px;color:#d4d4d4;letter-spacing:0.24px;">filter [A: NgxApp]</div>
<svg class="a" style="left:724px;top:3px;" width="20" height="22" viewBox="0 0 20 22"><path d="M8.6 4.8 Q3.4 5.4 3.2 10.6 Q3.2 15.6 8.4 15.6 Q11.2 15.6 11.6 13.8 Q10.4 12.2 12.2 10.8 Q12.8 9 12.6 7.2 Q11.8 4.6 8.6 4.8 Z" fill="#16b0f0"/><circle cx="8.4" cy="7.5" r="0.9" fill="#303030"/><circle cx="6.2" cy="9.4" r="0.9" fill="#303030"/><circle cx="6" cy="12.2" r="0.9" fill="#303030"/><circle cx="10" cy="13.6" r="0.8" fill="#303030"/><path d="M9.4 12.6 L15 7" stroke="#303030" stroke-width="2.6"/><path d="M9.6 12.4 L15 7" stroke="#16b0f0" stroke-width="1.5" stroke-linecap="round"/><ellipse cx="8" cy="17.6" rx="4" ry="0.8" fill="#1a5a70" opacity="0.5"/></svg>
<div class="t" style="left:745px;top:6px;height:18px;line-height:18px;color:#d4d4d4;">Palette</div>
<svg class="a" style="left:788px;top:3px;" width="22" height="22" viewBox="0 0 22 22"><defs><linearGradient id="rg" x1="0" y1="0" x2="0" y2="1"><stop offset="0" stop-color="#90a8e0"/><stop offset="0.45" stop-color="#5a86d0"/><stop offset="0.55" stop-color="#0c5ec0"/><stop offset="1" stop-color="#08c8f8"/></linearGradient></defs><rect x="3.1" y="4" width="16" height="15.9" rx="1.6" fill="url(#rg)"/><rect x="9" y="7" width="4.2" height="3.4" fill="#fff"/><rect x="10.3" y="8" width="1.6" height="1.4" fill="#000"/><path d="M11.1 10.4 V14 M6.3 14.4 V12 H15.9 V14.4" stroke="#e0f0ff" stroke-width="1"/><rect x="4.8" y="13.8" width="2.8" height="2.6" fill="#fff"/><rect x="9.6" y="13.8" width="3" height="2.6" fill="#fff"/><rect x="14.4" y="13.8" width="2.8" height="2.6" fill="#fff"/><rect x="5.8" y="14.4" width="0.9" height="1.4" fill="#222"/><rect x="10.6" y="14.8" width="1.2" height="0.8" fill="#422"/><rect x="15.4" y="14.4" width="0.9" height="1.4" fill="#222"/></svg>
<div class="t" style="left:811px;top:6px;height:18px;line-height:18px;color:#d4d4d4;letter-spacing:-0.34px;">References</div>
<svg class="a" style="left:875px;top:3px;" width="22" height="22" viewBox="0 0 22 22"><defs><linearGradient id="fp" x1="0" y1="0" x2="0" y2="1"><stop offset="0" stop-color="#b8e6fe"/><stop offset="0.6" stop-color="#6ab8f0"/><stop offset="1" stop-color="#2a7ad8"/></linearGradient></defs><ellipse cx="0" cy="0" rx="2.9" ry="6.9" transform="translate(6.6 13.4) rotate(24)" fill="url(#fp)" stroke="#151515" stroke-width="0.5"/><ellipse cx="0" cy="0" rx="2.8" ry="5.2" transform="translate(14.2 9.4) rotate(30)" fill="url(#fp)" stroke="#151515" stroke-width="0.5"/><path d="M8.2 15.4 L11.2 12 V13.8 H14 V17 H11.2 V18.8 Z" fill="#f8a010"/><path d="M19.4 17 L16.4 13.6 V15.4 H13 V18.6 H16.4 V20.4 Z" fill="#90d030"/></svg>
<div class="t" style="left:898px;top:6px;height:18px;line-height:18px;color:#f2f2f2;letter-spacing:-0.2px;">Source Picker</div>
<svg class="a" style="left:977px;top:10px;" width="11" height="11" viewBox="0 0 11 11"><path d="M1 1 L10 10 M10 1 L1 10" stroke="#e6e6e6" stroke-width="1"/></svg>
<svg class="a" style="left:996px;top:3px;" width="22" height="22" viewBox="0 0 22 22"><rect x="3.1" y="5" width="15.6" height="13.6" fill="#fdfbe8" stroke="#7a96c8" stroke-width="0.8"/><rect x="3" y="4.8" width="15.8" height="2.2" fill="#1a6ae0"/><path d="M7 12.6 L9 10 L10.4 12 L12 9.6 L13.4 12 L15.2 11.6 L13.6 14 L12 15.4 L10 14.4 L8 15 Z" fill="#f0b020" stroke="#d07010" stroke-width="0.6"/><rect x="10.2" y="8.2" width="1" height="3.6" fill="#223"/></svg>
<div class="t" style="left:1019px;top:6px;height:18px;line-height:18px;color:#d4d4d4;">Mobile Debug</div>
<svg class="a" style="left:1150px;top:9px;" width="12" height="12" viewBox="0 0 12 12"><rect x="0.5" y="0.5" width="9" height="3" fill="none" stroke="#e8e8e8" stroke-width="1"/></svg>
<svg class="a" style="left:1173px;top:9px;" width="12" height="12" viewBox="0 0 12 12"><rect x="0.5" y="0.5" width="9" height="9" fill="none" stroke="#e8e8e8" stroke-width="1"/><path d="M0 2.5 H10" stroke="#e8e8e8" stroke-width="1"/></svg>
<div class="a" style="left:604px;top:32px;width:23px;height:21px;background:#cde6f8;border-radius:3px;"></div>
<div class="a" style="left:681px;top:32px;width:23px;height:21px;background:#cde6f8;border-radius:3px;"></div>
<svg class="a" style="left:600px;top:28px;" width="270" height="30" viewBox="0 0 270 30"><path d="M14.4 11.6 L18.6 7.5 V9.9 H23.8 V13.3 H18.6 V15.7 Z" fill="#f6d42a" stroke="#8d6d12" stroke-width="0.8" stroke-linejoin="round"/><path d="M18.2 18.5 L14 14.4 V16.8 H8.2 V20.2 H14 V22.6 Z" fill="#f6d42a" stroke="#8d6d12" stroke-width="0.8" stroke-linejoin="round"/><path d="M45.5 13 L40.5 9 M45.5 13 L52 10.2 M45.5 13 L46 20.5" stroke="#d8f0fc" stroke-width="1.2"/><circle cx="40.2" cy="8.8" r="2" fill="#2a8ad8"/><circle cx="52.4" cy="10.4" r="1.8" fill="#2a8ad8"/><circle cx="46" cy="20.8" r="2.3" fill="#2278c8"/><circle cx="45.5" cy="13" r="2" fill="#8fd0f4"/><circle cx="43.4" cy="15.8" r="0.8" fill="#2a8ad8"/><circle cx="49.4" cy="15.4" r="0.8" fill="#2a8ad8"/><circle cx="46" cy="7.2" r="0.7" fill="#2a8ad8"/><path d="M64.2 11.4 A5.6 5.6 0 0 1 74.4 13.6" fill="none" stroke="#1a9ae8" stroke-width="2.6"/><path d="M62 7.6 L66.6 9.4 L63.2 13.4 Z" fill="#1a9ae8"/><path d="M73.8 17.8 A5.6 5.6 0 0 1 63.6 15.6" fill="none" stroke="#f5a000" stroke-width="2.6"/><path d="M76 21.6 L71.4 19.8 L74.8 15.8 Z" fill="#f5a000"/><polygon points="101.17,14.13 101.17,15.47 99.18,16.25 98.81,17.16 99.66,19.11 98.71,20.06 96.76,19.21 95.85,19.58 95.07,21.57 93.73,21.57 92.95,19.58 92.04,19.21 90.09,20.06 89.14,19.11 89.99,17.16 89.62,16.25 87.63,15.47 87.63,14.13 89.62,13.35 89.99,12.44 89.14,10.49 90.09,9.54 92.04,10.39 92.95,10.02 93.73,8.03 95.07,8.03 95.85,10.02 96.76,10.39 98.71,9.54 99.66,10.49 98.81,12.44 99.18,13.35" fill="#2a78b4"/><circle cx="94.4" cy="14.8" r="2.6" fill="#cde6f8"/><rect x="85.2" y="13" width="3.8" height="3.3" fill="#e8801a"/><path d="M107 12.5 H112 V9.5 L116.5 14.5 L112 19.5 V16.5 H107 Z" fill="none" stroke="#e08a1a" stroke-width="1.3" stroke-linejoin="round"/><path d="M123 11.5 H118 L114 15.5 L118 19.5 H123" fill="none" stroke="#2a8ac0" stroke-width="1.3"/><path d="M119 7.5 H118 V12 H119 M122 7.5 H123 V12 H122" stroke="#e08a1a" stroke-width="1.1" fill="none"/><path d="M132 21 Q130 13 138 12 V8.8 L144.3 13.6 L138 18.4 V15.2 Q134 15.2 132 21 Z" fill="#1a8ee0"/><path d="M154.6 7.6 H163.4 L167.4 11.6 V22.2 H154.6 Z" fill="none" stroke="#1f6fa8" stroke-width="1.1" stroke-linejoin="round"/><path d="M163.4 7.6 V11.6 H167.4" fill="none" stroke="#1f6fa8" stroke-width="0.9"/><path d="M157.4 13.8 H164.4 M157.4 15.8 H164.4 M157.4 17.8 H164.4 M157.4 19.6 H163" stroke="#2a9ad8" stroke-width="1"/><circle cx="184" cy="14.9" r="7.8" fill="#eaf4fa" stroke="#1a8ad0" stroke-width="0.9"/><path d="M179 10 l1 1 M182 8.5 l1 1.2 M186 9 l1.5 0.5 M189 11 l0.8 1 M178.5 18 l1.2 1 M183 20 l1 0.5 M187 19.5 l1.5 -1 M180 13 l0.8 0.8 M188 17 l0.8 0.6 M184 11 l1 0" stroke="#2a8ad0" stroke-width="1.1"/><path d="M177.4 14.9 H188.4" stroke="#f08a1a" stroke-width="2.4"/><path d="M186.6 11.4 L190.6 14.9 L186.6 18.4 Z" fill="#f08a1a"/><path d="M201.4 7.6 H209.6 L213.2 11.2 V22.2 H201.4 Z" fill="none" stroke="#1f6fa8" stroke-width="1.1" stroke-linejoin="round"/><path d="M209.4 7.6 L213.2 7.6 L213.2 11.4 Z" fill="#1f78b8"/><path d="M207.2 20 Q203.8 15.6 203.8 13.4 A3.4 3.4 0 0 1 210.6 13.4 Q210.6 15.6 207.2 20 Z" fill="#f0901e"/><circle cx="207.2" cy="13.4" r="1.2" fill="#303030"/><rect x="222.5" y="8" width="15" height="14.6" rx="3" fill="none" stroke="#1f7ec0" stroke-width="1.2"/><path d="M230 11.2 V19.6 M225.8 15.4 H234.2" stroke="#1e9ae0" stroke-width="1.7"/><rect x="249" y="7.4" width="8.6" height="9.5" fill="#f4f8fc" stroke="#2a7ad0" stroke-width="0.6"/><path d="M257.6 7.4 L259.6 9.4 V13 H257.6 Z" fill="#bcd8f0"/><path d="M251 11.2 Q251 8.6 253.4 8.6 Q255.8 8.6 255.8 10.8 Q255.8 12.4 253.6 13.2 V14.6" fill="none" stroke="#222" stroke-width="1.3"/><path d="M245.2 14 H249 L250 13 H259.8 L258.6 22 H245.2 Z" fill="#1a82d8"/><path d="M245.2 15 V22" stroke="#60a8e8" stroke-width="0.8"/><rect x="252.8" y="15.6" width="1.6" height="1.6" fill="#222"/></svg>
<div class="t" style="left:883px;top:34px;height:18px;line-height:18px;color:#b8b8b8;letter-spacing:-0.45px;">Page : Page</div>
<div class="a" style="left:604px;top:59px;width:290px;height:650px;background:#232323;border:1px solid #5c5c5c;box-sizing:border-box;"></div>
<div class="a" style="left:897px;top:59px;width:291px;height:650px;background:#232323;border:1px solid #5c5c5c;box-sizing:border-box;"></div>
<svg class="a" style="left:608px;top:60px;" width="14" height="18" viewBox="0 0 14 18"><path d="M3.7 8 L7.5 12 L11.3 8" fill="none" stroke="#c4c4c4" stroke-width="1.9" stroke-linecap="round" stroke-linejoin="round"/></svg>
<div class="a" style="left:626px;top:63px;width:13px;height:13px;background:#0a62c8;border-radius:3px"></div>
<div class="a" style="left:630px;top:69px;width:5px;height:1px;background:#ffffff;"></div>
<div class="t" style="left:644px;top:60px;height:18px;line-height:18px;color:#f2f2f2;">actions</div>
<svg class="a" style="left:624px;top:78px;" width="14" height="18" viewBox="0 0 14 18"><path d="M3.7 8 L7.5 12 L11.3 8" fill="none" stroke="#c4c4c4" stroke-width="1.9" stroke-linecap="round" stroke-linejoin="round"/></svg>
<div class="a" style="left:643px;top:82px;width:11px;height:11px;background:#efefef;border-radius:2.5px"></div>
<div class="t" style="left:660px;top:78px;height:18px;line-height:18px;color:#f2f2f2;">locals</div>
<div class="a" style="left:659px;top:100px;width:11px;height:11px;background:#efefef;border-radius:2.5px"></div>
<div class="t" style="left:676px;top:96px;height:18px;line-height:18px;color:#f2f2f2;">Page</div>
<svg class="a" style="left:624px;top:114px;" width="14" height="18" viewBox="0 0 14 18"><path d="M3.7 8 L7.5 12 L11.3 8" fill="none" stroke="#c4c4c4" stroke-width="1.9" stroke-linecap="round" stroke-linejoin="round"/></svg>
<div class="a" style="left:643px;top:118px;width:11px;height:11px;background:#efefef;border-radius:2.5px"></div>
<div class="t" style="left:660px;top:114px;height:18px;line-height:18px;color:#f2f2f2;">events</div>
<svg class="a" style="left:640px;top:132px;" width="14" height="18" viewBox="0 0 14 18"><path d="M3.7 8 L7.5 12 L11.3 8" fill="none" stroke="#c4c4c4" stroke-width="1.9" stroke-linecap="round" stroke-linejoin="round"/></svg>
<div class="a" style="left:659px;top:136px;width:11px;height:11px;background:#efefef;border-radius:2.5px"></div>
<div class="t" style="left:676px;top:132px;height:18px;line-height:18px;color:#f2f2f2;">pageDidEnter</div>
<div class="a" style="left:675px;top:154px;width:11px;height:11px;background:#efefef;border-radius:2.5px"></div>
<div class="t" style="left:692px;top:150px;height:18px;line-height:18px;color:#f2f2f2;">Call (filter.get_people)</div>
<svg class="a" style="left:624px;top:168px;" width="14" height="18" viewBox="0 0 14 18"><path d="M3.7 8 L7.5 12 L11.3 8" fill="none" stroke="#c4c4c4" stroke-width="1.9" stroke-linecap="round" stroke-linejoin="round"/></svg>
<div class="a" style="left:642px;top:171px;width:13px;height:13px;background:#0a62c8;border-radius:3px"></div>
<div class="a" style="left:646px;top:177px;width:5px;height:1px;background:#ffffff;"></div>
<div class="t" style="left:660px;top:168px;height:18px;line-height:18px;color:#f2f2f2;">controls</div>
<svg class="a" style="left:640px;top:186px;" width="14" height="18" viewBox="0 0 14 18"><path d="M3.7 8 L7.5 12 L11.3 8" fill="none" stroke="#c4c4c4" stroke-width="1.9" stroke-linecap="round" stroke-linejoin="round"/></svg>
<div class="a" style="left:659px;top:190px;width:11px;height:11px;background:#efefef;border-radius:2.5px"></div>
<div class="t" style="left:676px;top:186px;height:18px;line-height:18px;color:#f2f2f2;">ionInput</div>
<div class="a" style="left:675px;top:208px;width:11px;height:11px;background:#efefef;border-radius:2.5px"></div>
<div class="t" style="left:692px;top:204px;height:18px;line-height:18px;color:#f2f2f2;">Call (filter.get_people)</div>
<svg class="a" style="left:640px;top:222px;" width="14" height="18" viewBox="0 0 14 18"><path d="M3.7 8 L7.5 12 L11.3 8" fill="none" stroke="#c4c4c4" stroke-width="1.9" stroke-linecap="round" stroke-linejoin="round"/></svg>
<div class="a" style="left:658px;top:225px;width:13px;height:13px;background:#0a62c8;border-radius:3px"></div>
<svg class="a" style="left:658px;top:225px;" width="13" height="13" viewBox="0 0 13 13"><path d="M3.5 6.8 L5.5 8.8 L9.5 4.5" fill="none" stroke="#fff" stroke-width="1"/></svg>
<div class="a" style="left:673px;top:222px;width:65px;height:18px;background:#2e2e2e;border-radius:2px;"></div>
<div class="t" style="left:676px;top:222px;height:18px;line-height:18px;color:#f2f2f2;">ionChange</div>
<div class="a" style="left:675px;top:244px;width:11px;height:11px;background:#efefef;border-radius:2.5px"></div>
<div class="t" style="left:692px;top:240px;height:18px;line-height:18px;color:#f2f2f2;">Call (filter.get_people)</div>
<svg class="a" style="left:901px;top:60px;" width="14" height="18" viewBox="0 0 14 18"><path d="M3.7 8 L7.5 12 L11.3 8" fill="none" stroke="#c4c4c4" stroke-width="1.9" stroke-linecap="round" stroke-linejoin="round"/></svg>
<div class="t" style="left:919px;top:60px;height:18px;line-height:18px;color:#f2f2f2;">out</div>
<div class="t" style="left:935px;top:78px;height:18px;line-height:18px;color:#f2f2f2;">isTrusted</div>
<svg class="a" style="left:917px;top:96px;" width="14" height="18" viewBox="0 0 14 18"><path d="M3.7 8 L7.5 12 L11.3 8" fill="none" stroke="#c4c4c4" stroke-width="1.9" stroke-linecap="round" stroke-linejoin="round"/></svg>
<div class="t" style="left:935px;top:96px;height:18px;line-height:18px;color:#f2f2f2;">detail</div>
<div class="a" style="left:948px;top:115px;width:36px;height:17px;background:#303030;border-radius:2px;"></div>
<div class="t" style="left:951px;top:114px;height:18px;line-height:18px;color:#f2f2f2;">value</div>
<div class="t" style="left:935px;top:132px;height:18px;line-height:18px;color:#f2f2f2;">type</div>
<svg class="a" style="left:917px;top:150px;" width="14" height="18" viewBox="0 0 14 18"><path d="M5.6 6.9 L9.9 10.5 L5.6 14.1" fill="none" stroke="#7c7c7c" stroke-width="1.9" stroke-linecap="round" stroke-linejoin="round"/></svg>
<div class="t" style="left:935px;top:150px;height:18px;line-height:18px;color:#f2f2f2;">target</div>
<svg class="a" style="left:917px;top:168px;" width="14" height="18" viewBox="0 0 14 18"><path d="M5.6 6.9 L9.9 10.5 L5.6 14.1" fill="none" stroke="#7c7c7c" stroke-width="1.9" stroke-linecap="round" stroke-linejoin="round"/></svg>
<div class="t" style="left:935px;top:168px;height:18px;line-height:18px;color:#f2f2f2;">currentTarget</div>
<div class="t" style="left:935px;top:186px;height:18px;line-height:18px;color:#f2f2f2;">eventPhase</div>
<div class="t" style="left:935px;top:204px;height:18px;line-height:18px;color:#f2f2f2;">bubbles</div>
<div class="t" style="left:935px;top:222px;height:18px;line-height:18px;color:#f2f2f2;">cancelable</div>
<div class="t" style="left:935px;top:240px;height:18px;line-height:18px;color:#f2f2f2;">defaultPrevented</div>
<div class="t" style="left:935px;top:258px;height:18px;line-height:18px;color:#f2f2f2;">composed</div>
<div class="t" style="left:935px;top:276px;height:18px;line-height:18px;color:#f2f2f2;">timeStamp</div>
<svg class="a" style="left:917px;top:294px;" width="14" height="18" viewBox="0 0 14 18"><path d="M5.6 6.9 L9.9 10.5 L5.6 14.1" fill="none" stroke="#7c7c7c" stroke-width="1.9" stroke-linecap="round" stroke-linejoin="round"/></svg>
<div class="t" style="left:935px;top:294px;height:18px;line-height:18px;color:#f2f2f2;">srcElement</div>
<div class="t" style="left:935px;top:312px;height:18px;line-height:18px;color:#f2f2f2;">returnValue</div>
<div class="t" style="left:935px;top:330px;height:18px;line-height:18px;color:#f2f2f2;">cancelBubble</div>
<div class="t" style="left:681px;top:726px;height:18px;line-height:18px;color:#b8b8b8;">Prefix</div>
<div class="a" style="left:749px;top:724px;width:429px;height:21px;background:#303030;border:1px solid #6a6a6a;box-sizing:border-box;"></div>
<div class="a" style="left:749px;top:750px;width:429px;height:1px;background:#6a6a6a;"></div>
</body></html>
